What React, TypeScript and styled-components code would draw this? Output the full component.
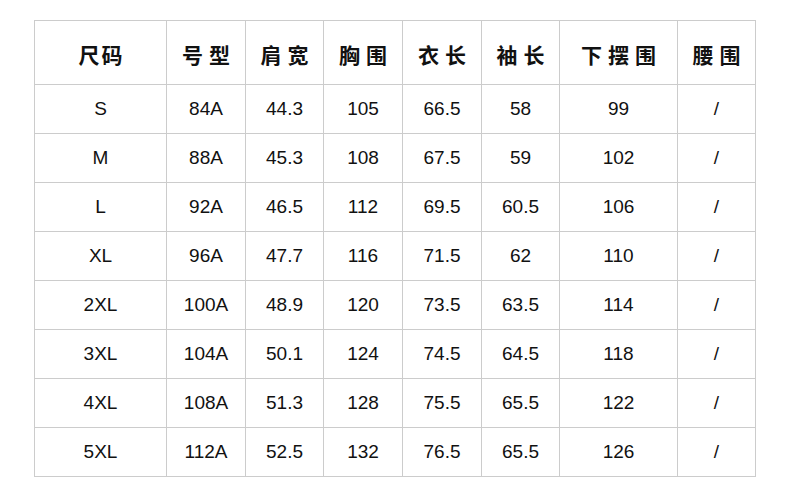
import React from 'react';
import styled, { createGlobalStyle } from 'styled-components';

const GlobalStyle = createGlobalStyle`
  * {
    margin: 0;
    padding: 0;
    box-sizing: border-box;
  }

  body {
    background: #ffffff;
    color: #111111;
    font-family: 'Liberation Sans', Arial, sans-serif;
  }
`;

const Page = styled.div`
  width: 790px;
  height: 477px;
  padding: 20px 0 0 34px;
  background: #ffffff;
`;

const Grid = styled.div`
  display: grid;
  grid-template-columns: 131px 78px 77px 78px 78px 77px 117px 77px;
  grid-template-rows: 63px repeat(8, 48px);
  gap: 1px;
  padding: 1px;
  width: 722px;
  background: #cccccc;
`;

const HeadCell = styled.div<{ $spacing: number }>`
  display: flex;
  align-items: center;
  justify-content: center;
  background: #ffffff;
  font-family: 'Noto Sans CJK SC', sans-serif;
  font-size: 21px;
  font-weight: 700;
  letter-spacing: ${p => p.$spacing}px;
  padding-left: ${p => p.$spacing}px;
  padding-top: 2px;
  color: #111111;
`;

const Cell = styled.div`
  display: flex;
  align-items: center;
  justify-content: center;
  background: #ffffff;
  font-size: 19px;
  color: #111111;
`;

const headers = ['尺码', '号型', '肩宽', '胸围', '衣长', '袖长', '下摆围', '腰围'];

const rows: string[][] = [
  ['S', '84A', '44.3', '105', '66.5', '58', '99', '/'],
  ['M', '88A', '45.3', '108', '67.5', '59', '102', '/'],
  ['L', '92A', '46.5', '112', '69.5', '60.5', '106', '/'],
  ['XL', '96A', '47.7', '116', '71.5', '62', '110', '/'],
  ['2XL', '100A', '48.9', '120', '73.5', '63.5', '114', '/'],
  ['3XL', '104A', '50.1', '124', '74.5', '64.5', '118', '/'],
  ['4XL', '108A', '51.3', '128', '75.5', '65.5', '122', '/'],
  ['5XL', '112A', '52.5', '132', '76.5', '65.5', '126', '/'],
];

export default function App() {
  return (
    <>
      <GlobalStyle />
      <Page>
        <Grid>
          {headers.map((h, i) => (
            <HeadCell key={h} $spacing={i === 0 ? 2 : 6}>
              {h}
            </HeadCell>
          ))}
          {rows.map(row =>
            row.map((v, i) => <Cell key={row[0] + i}>{v}</Cell>)
          )}
        </Grid>
      </Page>
    </>
  );
}
